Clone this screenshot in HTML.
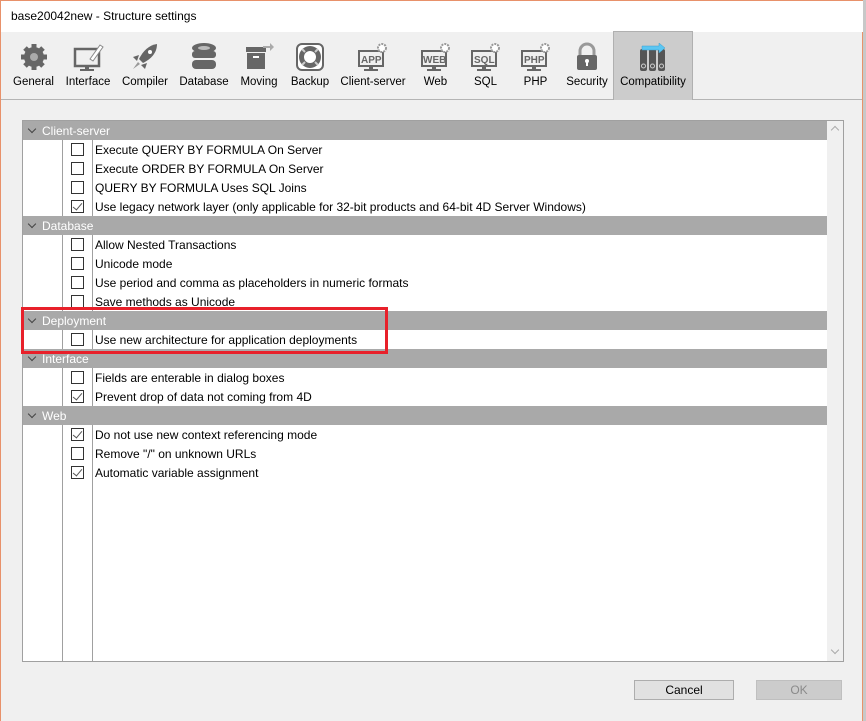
<!DOCTYPE html>
<html><head><style>
*{margin:0;padding:0;box-sizing:border-box}
body{width:866px;height:721px;overflow:hidden;background:#f0f0f0;font-family:"Liberation Sans",sans-serif;font-size:12px;color:#000;position:relative}
.a{position:absolute}
#win{left:0;top:0;width:863px;height:721px;border-top:1px solid #e8916a;border-left:1px solid #e8916a;border-right:1px solid #e8916a;background:#f0f0f0}
#title{left:0;top:0;width:862px;height:31px;background:#fff;padding:8px 0 0 10px;font-size:12px}
.tb{top:31px;height:68px;text-align:center;font-size:11.5px}
.tb svg{position:absolute;left:50%;margin-left:-16px;top:10px}
.tb span{position:absolute;left:0;right:0;top:45px;white-space:nowrap}
#list{left:22px;top:120px;width:822px;height:542px;border:1px solid #a0a0a0;background:#fff}
.hd{left:0;width:804px;height:19px;background:#a9a9a9;color:#fff;padding:3px 0 0 19px}
.hd:before{content:"";position:absolute;left:6px;top:5px;width:5px;height:5px;border-right:1.5px solid #444;border-bottom:1.5px solid #444;transform:rotate(45deg)}
.it{left:72px;font-size:12px;height:19px;padding-top:3px}
.cb{left:48px;width:13px;height:13px;border:1px solid #333;background:#fff}
.cb.on:after{content:"";position:absolute;left:3px;top:0px;width:4px;height:8px;border-right:1.5px solid #555;border-bottom:1.5px solid #555;transform:rotate(40deg)}
.vl{width:1px;background:#a0a0a0}
.btn{top:680px;height:20px;border:1px solid #adadad;background:#e1e1e1;text-align:center;padding-top:2px}
</style></head><body>
<div class="a" style="left:863px;top:0;width:3px;height:721px;background:#c8c8c8"></div>
<div id="win" class="a">
</div>
<div id="title" class="a" style="left:1px;top:1px">base20042new - Structure settings</div>
<div class="a" style="left:1px;top:99px;width:861px;height:1px;background:#b4b4b4"></div>
<div class="a" style="left:613px;top:31px;width:80px;height:69px;background:#cccccc;border:1px solid #b0b0b0;border-bottom:none"></div>

<div class="a tb" style="left:6px;width:55px"><svg width="32" height="32" viewBox="0 0 32 32"><g fill="#666"><circle cx="16" cy="16" r="10"/><g stroke="#666" stroke-width="5"><line x1="16" y1="3" x2="16" y2="29"/><line x1="3" y1="16" x2="29" y2="16"/><line x1="7" y1="7" x2="25" y2="25"/><line x1="25" y1="7" x2="7" y2="25"/></g></g><circle cx="16" cy="16" r="4" fill="#aaa"/></svg><span>General</span></div>
<div class="a tb" style="left:62px;width:52px"><svg width="32" height="32" viewBox="0 0 32 32"><rect x="3" y="8" width="24" height="17" fill="none" stroke="#666" stroke-width="2.5"/><rect x="13" y="25" width="4" height="3" fill="#666"/><rect x="8" y="28" width="14" height="2" fill="#666"/><path d="M18 18 L28 4 L31 6 L21 20 Z" fill="#fff" stroke="#888"/></svg><span>Interface</span></div>
<div class="a tb" style="left:117px;width:56px"><svg width="32" height="32" viewBox="0 0 32 32"><path d="M28 3 C20 4 14 10 10 18 L14 22 C22 18 28 12 28 3Z" fill="#666"/><path d="M10 14 L4 16 L8 20Z M18 22 L16 28 L12 24Z" fill="#666"/><path d="M9 21 L4 28 L11 23Z" fill="#999"/><circle cx="21" cy="11" r="2" fill="#fff"/></svg><span>Compiler</span></div>
<div class="a tb" style="left:177px;width:54px"><svg width="32" height="32" viewBox="0 0 32 32"><ellipse cx="16" cy="7" rx="12" ry="5" fill="#666"/><ellipse cx="16" cy="7" rx="6" ry="2" fill="#bbb"/><rect x="4" y="10" width="24" height="7" rx="3" fill="#666"/><rect x="4" y="19" width="24" height="9" rx="4" fill="#666"/></svg><span>Database</span></div>
<div class="a tb" style="left:235px;width:48px"><svg width="32" height="32" viewBox="0 0 32 32"><rect x="3" y="6" width="20" height="5" fill="#666"/><rect x="4" y="12" width="18" height="16" fill="#666"/><rect x="10" y="15" width="6" height="2" fill="#fff"/><path d="M20 5 H27 V2 L31 6 L27 10 V7 H20Z" fill="#aaa"/></svg><span>Moving</span></div>
<div class="a tb" style="left:286px;width:48px"><svg width="32" height="32" viewBox="0 0 32 32"><rect x="3" y="3" width="26" height="26" rx="5" fill="#fff" stroke="#666" stroke-width="2"/><circle cx="16" cy="16" r="11" fill="#666"/><circle cx="16" cy="16" r="6" fill="#fff"/><g stroke="#ccc" stroke-width="2"><line x1="8" y1="8" x2="11" y2="11"/><line x1="24" y1="8" x2="21" y2="11"/><line x1="8" y1="24" x2="11" y2="21"/><line x1="24" y1="24" x2="21" y2="21"/></g></svg><span>Backup</span></div>
<div class="a tb" style="left:337px;width:72px"><svg width="32" height="32" viewBox="0 0 32 32"><rect x="2" y="10" width="24" height="15" fill="none" stroke="#666" stroke-width="2"/><text x="4" y="22" font-size="10" font-weight="bold" fill="#666" font-family="Liberation Sans">APP</text><rect x="12" y="25" width="4" height="3" fill="#666"/><rect x="7" y="28" width="14" height="2" fill="#666"/><circle cx="25" cy="7" r="4" fill="#fff" stroke="#999" stroke-width="2" stroke-dasharray="2 1"/></svg><span>Client-server</span></div>
<div class="a tb" style="left:413px;width:45px"><svg width="32" height="32" viewBox="0 0 32 32"><rect x="2" y="10" width="24" height="15" fill="none" stroke="#666" stroke-width="2"/><text x="3" y="22" font-size="10" font-weight="bold" fill="#666" font-family="Liberation Sans">WEB</text><rect x="12" y="25" width="4" height="3" fill="#666"/><rect x="7" y="28" width="14" height="2" fill="#666"/><circle cx="25" cy="7" r="4" fill="#fff" stroke="#999" stroke-width="2" stroke-dasharray="2 1"/></svg><span>Web</span></div>
<div class="a tb" style="left:463px;width:45px"><svg width="32" height="32" viewBox="0 0 32 32"><rect x="2" y="10" width="24" height="15" fill="none" stroke="#666" stroke-width="2"/><text x="4" y="22" font-size="10" font-weight="bold" fill="#666" font-family="Liberation Sans">SQL</text><rect x="12" y="25" width="4" height="3" fill="#666"/><rect x="7" y="28" width="14" height="2" fill="#666"/><circle cx="25" cy="7" r="4" fill="#fff" stroke="#999" stroke-width="2" stroke-dasharray="2 1"/></svg><span>SQL</span></div>
<div class="a tb" style="left:513px;width:45px"><svg width="32" height="32" viewBox="0 0 32 32"><rect x="2" y="10" width="24" height="15" fill="none" stroke="#666" stroke-width="2"/><text x="4" y="22" font-size="10" font-weight="bold" fill="#666" font-family="Liberation Sans">PHP</text><rect x="12" y="25" width="4" height="3" fill="#666"/><rect x="7" y="28" width="14" height="2" fill="#666"/><circle cx="25" cy="7" r="4" fill="#fff" stroke="#999" stroke-width="2" stroke-dasharray="2 1"/></svg><span>PHP</span></div>
<div class="a tb" style="left:563px;width:48px"><svg width="32" height="32" viewBox="0 0 32 32"><path d="M9 15 V10 A7 7 0 0 1 23 10 V15" fill="none" stroke="#999" stroke-width="3"/><rect x="6" y="14" width="20" height="15" rx="2" fill="#666"/><circle cx="16" cy="20" r="2" fill="#fff"/><rect x="15" y="20" width="2" height="5" fill="#fff"/></svg><span>Security</span></div>
<div class="a tb" style="left:613px;width:80px"><svg width="32" height="32" viewBox="0 0 32 32"><g fill="#555"><rect x="3" y="8" width="7" height="22" rx="2"/><rect x="12" y="8" width="7" height="22" rx="2"/><rect x="21" y="8" width="7" height="22" rx="2"/></g><g fill="none" stroke="#ccc"><circle cx="6.5" cy="25" r="2"/><circle cx="15.5" cy="25" r="2"/><circle cx="24.5" cy="25" r="2"/></g><path d="M5 5 H22 V2 L28 7 L22 12 V9 H5Z" fill="#5bc6f2" stroke="#3aa0d0" stroke-width=".5"/></svg><span>Compatibility</span></div>

<div id="list" class="a">
 <div class="a vl" style="left:39px;top:19px;height:521px"></div>
 <div class="a vl" style="left:69px;top:19px;height:521px"></div>
 <div class="a" style="left:804px;top:0;width:16px;height:540px;background:#f0f0f0"></div>
 <div class="a" style="left:809px;top:6px;width:6px;height:6px;border-left:1.5px solid #aaa;border-top:1.5px solid #aaa;transform:rotate(45deg)"></div>
 <div class="a" style="left:809px;top:526px;width:6px;height:6px;border-right:1.5px solid #aaa;border-bottom:1.5px solid #aaa;transform:rotate(45deg)"></div>

 <div class="a hd" style="top:0">Client-server</div>
 <div class="a cb" style="top:22px"></div><div class="a it" style="top:19px">Execute QUERY BY FORMULA On Server</div>
 <div class="a cb" style="top:41px"></div><div class="a it" style="top:38px">Execute ORDER BY FORMULA On Server</div>
 <div class="a cb" style="top:60px"></div><div class="a it" style="top:57px">QUERY BY FORMULA Uses SQL Joins</div>
 <div class="a cb on" style="top:79px"></div><div class="a it" style="top:76px">Use legacy network layer (only applicable for 32-bit products and 64-bit 4D Server Windows)</div>
 <div class="a hd" style="top:95px">Database</div>
 <div class="a cb" style="top:117px"></div><div class="a it" style="top:114px">Allow Nested Transactions</div>
 <div class="a cb" style="top:136px"></div><div class="a it" style="top:133px">Unicode mode</div>
 <div class="a cb" style="top:155px"></div><div class="a it" style="top:152px">Use period and comma as placeholders in numeric formats</div>
 <div class="a cb" style="top:174px"></div><div class="a it" style="top:171px">Save methods as Unicode</div>
 <div class="a hd" style="top:190px">Deployment</div>
 <div class="a cb" style="top:212px"></div><div class="a it" style="top:209px">Use new architecture for application deployments</div>
 <div class="a hd" style="top:228px">Interface</div>
 <div class="a cb" style="top:250px"></div><div class="a it" style="top:247px">Fields are enterable in dialog boxes</div>
 <div class="a cb on" style="top:269px"></div><div class="a it" style="top:266px">Prevent drop of data not coming from 4D</div>
 <div class="a hd" style="top:285px">Web</div>
 <div class="a cb on" style="top:307px"></div><div class="a it" style="top:304px">Do not use new context referencing mode</div>
 <div class="a cb" style="top:326px"></div><div class="a it" style="top:323px">Remove "/" on unknown URLs</div>
 <div class="a cb on" style="top:345px"></div><div class="a it" style="top:342px">Automatic variable assignment</div>
</div>
<div class="a" style="left:21px;top:307px;width:367px;height:47px;border:3px solid #e8202a"></div>

<div class="a btn" style="left:634px;width:100px">Cancel</div>
<div class="a btn" style="left:756px;width:86px;background:#cccccc;border-color:#bfbfbf;color:#8a8a8a">OK</div>
</body></html>
